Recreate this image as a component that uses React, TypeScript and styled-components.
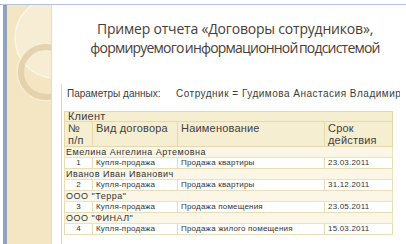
import React from "react";
import styled, { createGlobalStyle } from "styled-components";

const GlobalStyle = createGlobalStyle`
  html, body {
    margin: 0;
    padding: 0;
    background: #ffffff;
  }
  #root {
    width: 406px;
    height: 244px;
    overflow: hidden;
  }
`

const Styles = {
  Page: styled.div`
    width: 406px;
    height: 244px;
    display: flex;
    flex-direction: column;
    background: #ffffff;
    overflow: hidden;
  `,
  TopLine: styled.div`
    height: 1px;
    margin-top: 4px;
    background: #b4c2d9;
  `,
  Body: styled.div`
    flex: 1;
    display: flex;
    min-height: 0;
  `,
  Sidebar: styled.div`
    position: relative;
    width: 44px;
    margin-left: 3px;
    border-left: 4px solid #8ea3c3;
    border-right: 1px solid #e8dcc0;
    background: #f4e5c3;
    overflow: hidden;
  `,
  Decor: styled.svg`
    position: absolute;
    left: 0;
    top: 0;
  `,
  Main: styled.div`
    flex: 1;
    display: flex;
    flex-direction: column;
    min-width: 0;
  `,
  Title: styled.div`
    height: 79px;
    display: flex;
    flex-direction: column;
    align-items: center;
    justify-content: center;
    padding-left: 12px;
    padding-bottom: 14px;
    box-sizing: border-box;
    font-family: "Open Sans", "Liberation Sans", sans-serif;
    font-size: 14px;
    line-height: 19px;
    color: #4a3d3a;
    white-space: nowrap;
  `,
  TitleLine: styled.div<{ spacing: number; words?: number }>`
    letter-spacing: ${({ spacing }) => spacing}px;
    word-spacing: ${({ words }) => words || 0}px;
  `,
  Report: styled.div`
    flex: 1;
    margin-left: 9px;
    width: 339px;
    border-left: 1px solid #d6d6d6;
    padding: 4px 0 0 2px;
    box-sizing: border-box;
    overflow: hidden;
    font-family: "Liberation Sans", Arial, sans-serif;
    color: #3c3c3c;
  `,
  Params: styled.div`
    display: flex;
    height: 12px;
    padding-left: 3px;
    font-size: 10px;
    line-height: 12px;
    white-space: nowrap;
  `,
  ParamLabel: styled.span`
    width: 109px;
    flex-shrink: 0;
  `,
  ParamValue: styled.span`
    letter-spacing: 0.5px;
  `,
  Table: styled.table`
    margin-top: 11px;
    width: 328px;
    border-collapse: collapse;
    table-layout: fixed;
  `,
  Col: styled.col<{ w: number }>`
    width: ${({ w }) => w}px;
  `,
  HeadCell: styled.td<{ rows?: number }>`
    height: ${({ rows }) => rows === 2 ? 24 : 9}px;
    padding: 0 0 0 3px;
    background: #f6eed1;
    border: 1px solid #e4d9ad;
    font-size: 11px;
    line-height: ${({ rows }) => rows === 2 ? 12 : 9}px;
    vertical-align: top;
    color: #3f3f3f;
    letter-spacing: 0.2px;
  `,
  GroupCell: styled.td`
    height: 10px;
    padding: 0 0 0 1px;
    background: #fbf6e5;
    border: 1px solid #ebe2c2;
    font-size: 9px;
    line-height: 10px;
    letter-spacing: 0.5px;
    white-space: nowrap;
    overflow: hidden;
    color: #333333;
  `,
  DataCell: styled.td<{ center?: boolean }>`
    height: 10px;
    padding: 0 0 0 ${({ center }) => center ? 0 : 3}px;
    background: #ffffff;
    border: 1px solid #e6dcb5;
    font-size: 8px;
    line-height: 10px;
    letter-spacing: 0.2px;
    text-align: ${({ center }) => center ? `center` : `left`};
    white-space: nowrap;
    overflow: hidden;
    color: #333333;
  `
}

const rows = [
  { client: "Емелина Ангелина Артемовна", n: 1, kind: "Купля-продажа", name: "Продажа квартиры", date: "23.03.2011" },
  { client: "Иванов Иван Иванович", n: 2, kind: "Купля-продажа", name: "Продажа квартиры", date: "31.12.2011" },
  { client: "ООО \"Терра\"", n: 3, kind: "Купля-продажа", name: "Продажа помещения", date: "23.05.2011" },
  { client: "ООО \"ФИНАЛ\"", n: 4, kind: "Купля-продажа", name: "Продажа жилого помещения", date: "15.03.2011" }
]

const SidebarDecor = () => (
  <Styles.Decor width="44" height="239" viewBox="0 0 44 239">
    <circle cx="48" cy="33" r="40" fill="#f7ecd4" stroke="#fcf6e8" strokeWidth="1.5" />
    <circle cx="39" cy="67" r="25" fill="none" stroke="#e0cfa9" strokeWidth="6" opacity="0.85" />
    <circle cx="39" cy="67" r="29" fill="none" stroke="#f8efdb" strokeWidth="1" />
  </Styles.Decor>
)

const App = () => {
  return (
    <Styles.Page>
      <GlobalStyle />
      <Styles.TopLine />
      <Styles.Body>
        <Styles.Sidebar>
          <SidebarDecor />
        </Styles.Sidebar>
        <Styles.Main>
          <Styles.Title>
            <Styles.TitleLine spacing={-0.2}>Пример отчета «Договоры сотрудников»,</Styles.TitleLine>
            <Styles.TitleLine spacing={-0.8} words={-1.5}>формируемого информационной подсистемой</Styles.TitleLine>
          </Styles.Title>
          <Styles.Report>
            <Styles.Params>
              <Styles.ParamLabel>Параметры данных:</Styles.ParamLabel>
              <Styles.ParamValue>Сотрудник = Гудимова Анастасия Владимировна</Styles.ParamValue>
            </Styles.Params>
            <Styles.Table>
              <colgroup>
                <Styles.Col w={28} />
                <Styles.Col w={85} />
                <Styles.Col w={147} />
                <Styles.Col w={68} />
              </colgroup>
              <thead>
                <tr>
                  <Styles.HeadCell colSpan={4}>Клиент</Styles.HeadCell>
                </tr>
                <tr>
                  <Styles.HeadCell rows={2}>№<br />п/п</Styles.HeadCell>
                  <Styles.HeadCell rows={2}>Вид договора</Styles.HeadCell>
                  <Styles.HeadCell rows={2}>Наименование</Styles.HeadCell>
                  <Styles.HeadCell rows={2}>Срок<br />действия</Styles.HeadCell>
                </tr>
              </thead>
              <tbody>
                {
                  rows.map((row) => {
                    return (
                      <React.Fragment key={row.n}>
                        <tr>
                          <Styles.GroupCell colSpan={4}>{ row.client }</Styles.GroupCell>
                        </tr>
                        <tr>
                          <Styles.DataCell center>{ row.n }</Styles.DataCell>
                          <Styles.DataCell>{ row.kind }</Styles.DataCell>
                          <Styles.DataCell>{ row.name }</Styles.DataCell>
                          <Styles.DataCell>{ row.date }</Styles.DataCell>
                        </tr>
                      </React.Fragment>
                    )
                  })
                }
              </tbody>
            </Styles.Table>
          </Styles.Report>
        </Styles.Main>
      </Styles.Body>
    </Styles.Page>
  )
}

export default App
